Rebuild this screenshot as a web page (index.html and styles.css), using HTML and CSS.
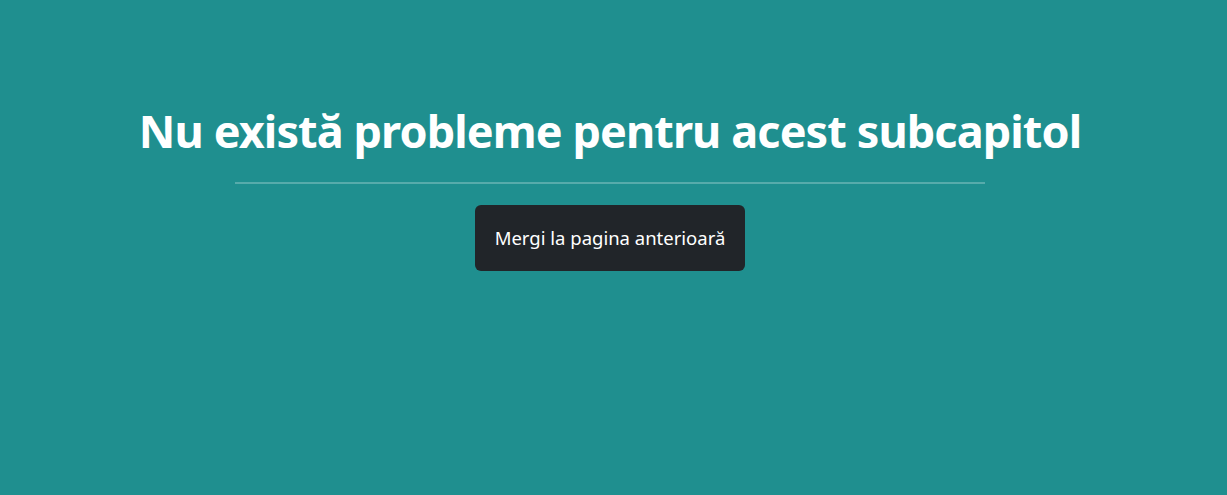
FILE: index.html
```html
<!DOCTYPE html>
<html lang="ro">
<head>
<meta charset="utf-8">
<title>Nu există probleme</title>
<link rel="stylesheet" href="styles.css">
</head>
<body>
<main class="page">
  <section class="empty">
    <h1 class="empty-title">Nu există probleme pentru acest subcapitol</h1>
    <hr class="empty-rule">
    <button class="btn-back" type="button">Mergi la pagina anterioară</button>
  </section>
</main>
</body>
</html>
```
FILE: styles.css
```css
html, body {
  margin: 0;
  padding: 0;
  height: 100%;
}
body {
  background: #1f8f8f;
  font-family: "Noto Sans", "Open Sans", sans-serif;
  color: #fff;
}
.page {
  width: 1220px;
  padding-top: 96px;
}
.empty {
  display: flex;
  flex-direction: column;
  align-items: center;
}
.empty-title {
  margin: 0;
  font-size: 45px;
  font-weight: 700;
  line-height: 70px;
  letter-spacing: -0.9px;
  white-space: nowrap;
}
.empty-rule {
  width: 750px;
  margin: 16px 0 21px;
  border: 0;
  border-top: 2px solid rgba(255, 255, 255, 0.25);
  height: 0;
}
.btn-back {
  background: #212529;
  color: #fff;
  border: 0;
  border-radius: 6px;
  font-family: inherit;
  font-size: 18.5px;
  line-height: 26px;
  padding: 20px 10px;
  width: 270px;
  cursor: pointer;
}
```
